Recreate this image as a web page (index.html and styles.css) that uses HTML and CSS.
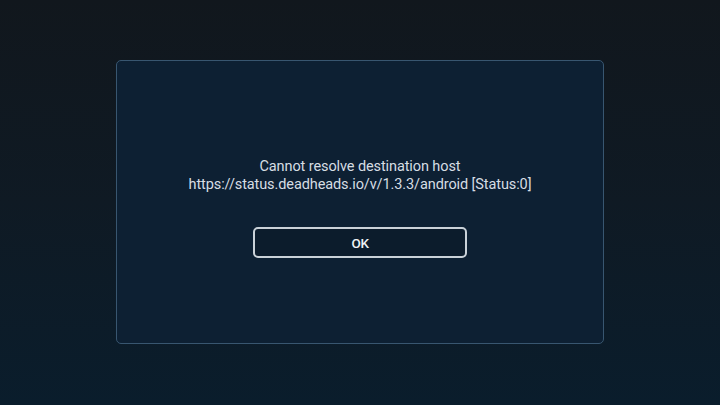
FILE: index.html
```html
<!DOCTYPE html>
<html>
<head>
<meta charset="utf-8">
<link rel="stylesheet" href="styles.css">
</head>
<body>
<div class="screen">
  <div class="dialog">
    <div class="message">
      <div>Cannot resolve destination host</div>
      <div>https://status.deadheads.io/v/1.3.3/android [Status:0]</div>
    </div>
    <button class="ok">OK</button>
  </div>
</div>
</body>
</html>
```
FILE: styles.css
```css
html, body {
  margin: 0;
  padding: 0;
}
.screen {
  width: 720px;
  height: 405px;
  background: linear-gradient(180deg, #11171d 0%, #0f1a24 50%, #0a1d2c 100%);
  display: flex;
  flex-direction: column;
  align-items: center;
  padding-top: 60px;
  box-sizing: border-box;
}
.dialog {
  width: 488px;
  height: 284px;
  box-sizing: border-box;
  background: #0d2033;
  border: 1px solid #385670;
  border-radius: 5px;
  display: flex;
  flex-direction: column;
  align-items: center;
  padding-top: 97px;
}
.message {
  font-family: Roboto, "Liberation Sans", sans-serif;
  font-size: 14.5px;
  line-height: 18px;
  color: #d6dde3;
  text-align: center;
  letter-spacing: -0.1px;
}
.ok {
  margin-top: 33px;
  width: 214px;
  height: 31px;
  box-sizing: border-box;
  background: #0c1c2c;
  border: 2px solid #c9d1d8;
  border-radius: 5px;
  color: #eef2f5;
  font-family: Roboto, "Liberation Sans", sans-serif;
  font-weight: 500;
  font-size: 13.5px;
  letter-spacing: -0.3px;
  padding: 0;
}
```
